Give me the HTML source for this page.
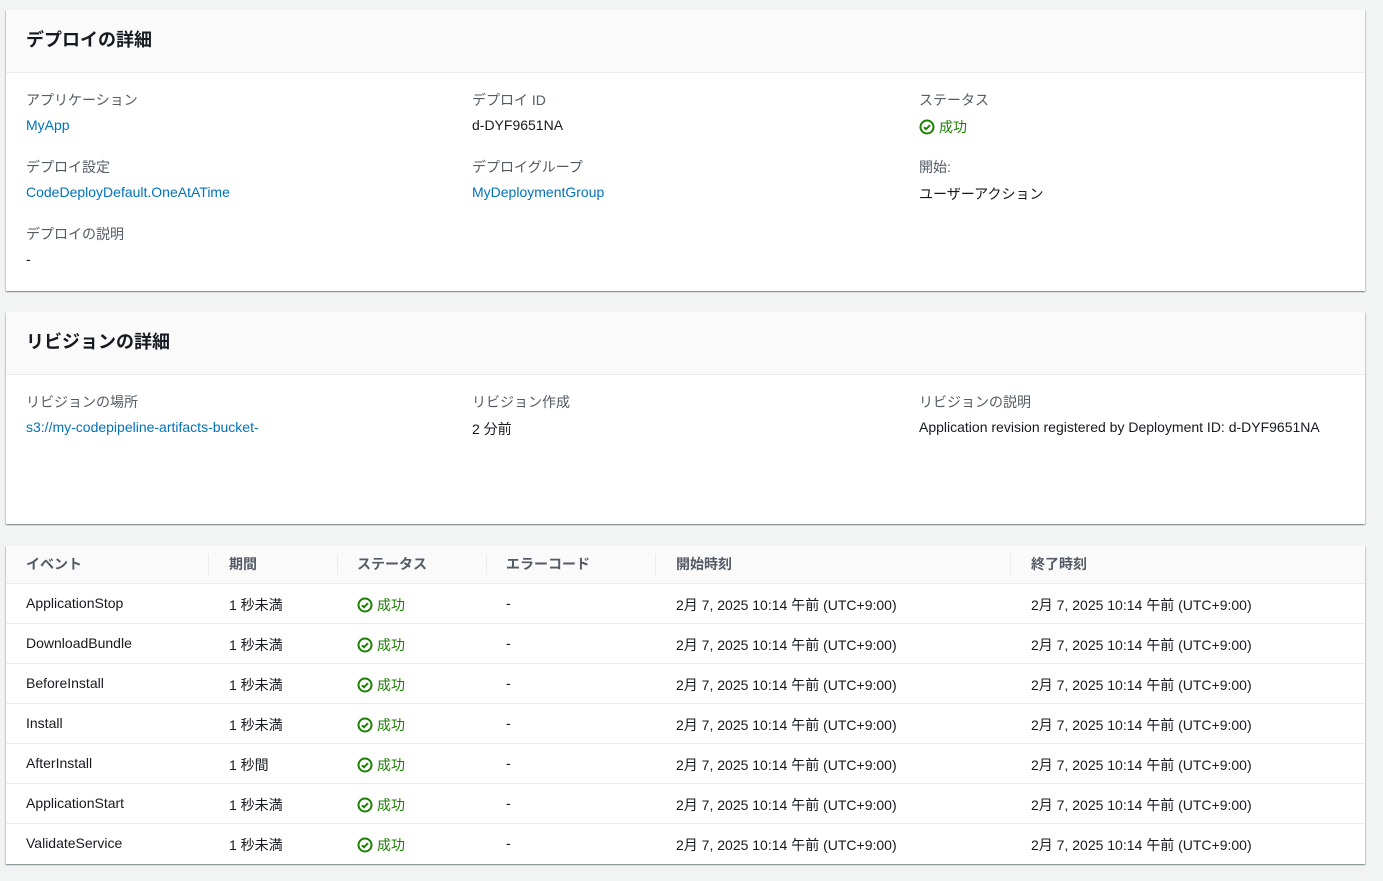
<!DOCTYPE html><html><head><meta charset="utf-8"><style>
*{box-sizing:border-box;margin:0;padding:0}
body{width:1383px;height:881px;background:#f2f3f3;font-family:"Liberation Sans","Noto Sans CJK JP",sans-serif;font-size:14px;color:#16191f;position:relative;overflow:hidden}
.card{position:absolute;left:6px;width:1359px;background:#fff;box-shadow:0 1px 1px 0 rgba(0,28,36,.3),1px 1px 1px 0 rgba(0,28,36,.15),-1px 1px 1px 0 rgba(0,28,36,.15)}
.hd{height:63px;background:#fafafa;border-bottom:1px solid #eaeded;padding:0 20px;font-size:18px;font-weight:bold;line-height:60px}
.a{position:absolute;white-space:nowrap}
.l{color:#545b64}
.lk{color:#0073bb}
.ok{color:#1d8102}
.ok svg{vertical-align:-3px;margin-right:4px}
.th{position:absolute;top:0;height:37px;line-height:37px;font-weight:bold;color:#545b64;background:#fafafa}
.row{position:absolute;left:0;width:1359px;height:40px;border-top:1px solid #eaeded}
.sep{position:absolute;top:8px;width:1px;height:21px;background:#eaeded}
</style></head><body>
<div class="card" style="top:10px;height:281px"><div class="hd">デプロイの詳細</div>
<span class="a l" style="left:20px;top:80px">アプリケーション</span>
<span class="a lk" style="left:20px;top:107px">MyApp</span>
<span class="a l" style="left:20px;top:147px">デプロイ設定</span>
<span class="a lk" style="left:20px;top:174px">CodeDeployDefault.OneAtATime</span>
<span class="a l" style="left:20px;top:214px">デプロイの説明</span>
<span class="a" style="left:20px;top:241px">-</span>
<span class="a l" style="left:466px;top:80px">デプロイ ID</span>
<span class="a" style="left:466px;top:107px">d-DYF9651NA</span>
<span class="a l" style="left:466px;top:147px">デプロイグループ</span>
<span class="a lk" style="left:466px;top:174px">MyDeploymentGroup</span>
<span class="a l" style="left:913px;top:80px">ステータス</span>
<span class="a ok" style="left:913px;top:107px"><svg width="16" height="16" viewBox="0 0 16 16"><circle cx="8" cy="8" r="6.5" fill="none" stroke="#1d8102" stroke-width="2"/><path d="M5 8.2l2 2 4-4" fill="none" stroke="#1d8102" stroke-width="2"/></svg>成功</span>
<span class="a l" style="left:913px;top:147px">開始:</span>
<span class="a" style="left:913px;top:174px">ユーザーアクション</span>
</div>
<div class="card" style="top:312px;height:212px"><div class="hd">リビジョンの詳細</div>
<span class="a l" style="left:20px;top:80px">リビジョンの場所</span>
<span class="a lk" style="left:20px;top:107px">s3://my-codepipeline-artifacts-bucket-</span>
<span class="a l" style="left:466px;top:80px">リビジョン作成</span>
<span class="a" style="left:466px;top:107px">2 分前</span>
<span class="a l" style="left:913px;top:80px">リビジョンの説明</span>
<span class="a" style="left:913px;top:107px">Application revision registered by Deployment ID: d-DYF9651NA</span>
</div>
<div class="card" style="top:546px;height:318px">
<div class="th" style="left:0;width:1359px"></div>
<span class="th" style="left:20px">イベント</span><span class="sep" style="left:202px"></span>
<span class="th" style="left:223px">期間</span><span class="sep" style="left:331px"></span>
<span class="th" style="left:351px">ステータス</span><span class="sep" style="left:480px"></span>
<span class="th" style="left:500px">エラーコード</span><span class="sep" style="left:649px"></span>
<span class="th" style="left:670px">開始時刻</span><span class="sep" style="left:1004px"></span>
<span class="th" style="left:1025px">終了時刻</span>
<div id="rows"></div>
</div>
<script>
var ev=[["ApplicationStop","1 秒未満"],["DownloadBundle","1 秒未満"],["BeforeInstall","1 秒未満"],["Install","1 秒未満"],["AfterInstall","1 秒間"],["ApplicationStart","1 秒未満"],["ValidateService","1 秒未満"]];
var h="";var svg='<svg width="16" height="16" viewBox="0 0 16 16"><circle cx="8" cy="8" r="6.5" fill="none" stroke="#1d8102" stroke-width="2"/><path d="M5 8.2l2 2 4-4" fill="none" stroke="#1d8102" stroke-width="2"/></svg>';
ev.forEach(function(e,i){var t="2月 7, 2025 10:14 午前 (UTC+9:00)";h+='<div class="row" style="top:'+(37+i*40)+'px"><span class="a" style="left:20px;top:11px">'+e[0]+'</span><span class="a" style="left:223px;top:11px">'+e[1]+'</span><span class="a ok" style="left:351px;top:11px">'+svg+'成功</span><span class="a" style="left:500px;top:11px">-</span><span class="a" style="left:670px;top:11px">'+t+'</span><span class="a" style="left:1025px;top:11px">'+t+'</span></div>'});
document.getElementById("rows").innerHTML=h;
</script>
</body></html>
